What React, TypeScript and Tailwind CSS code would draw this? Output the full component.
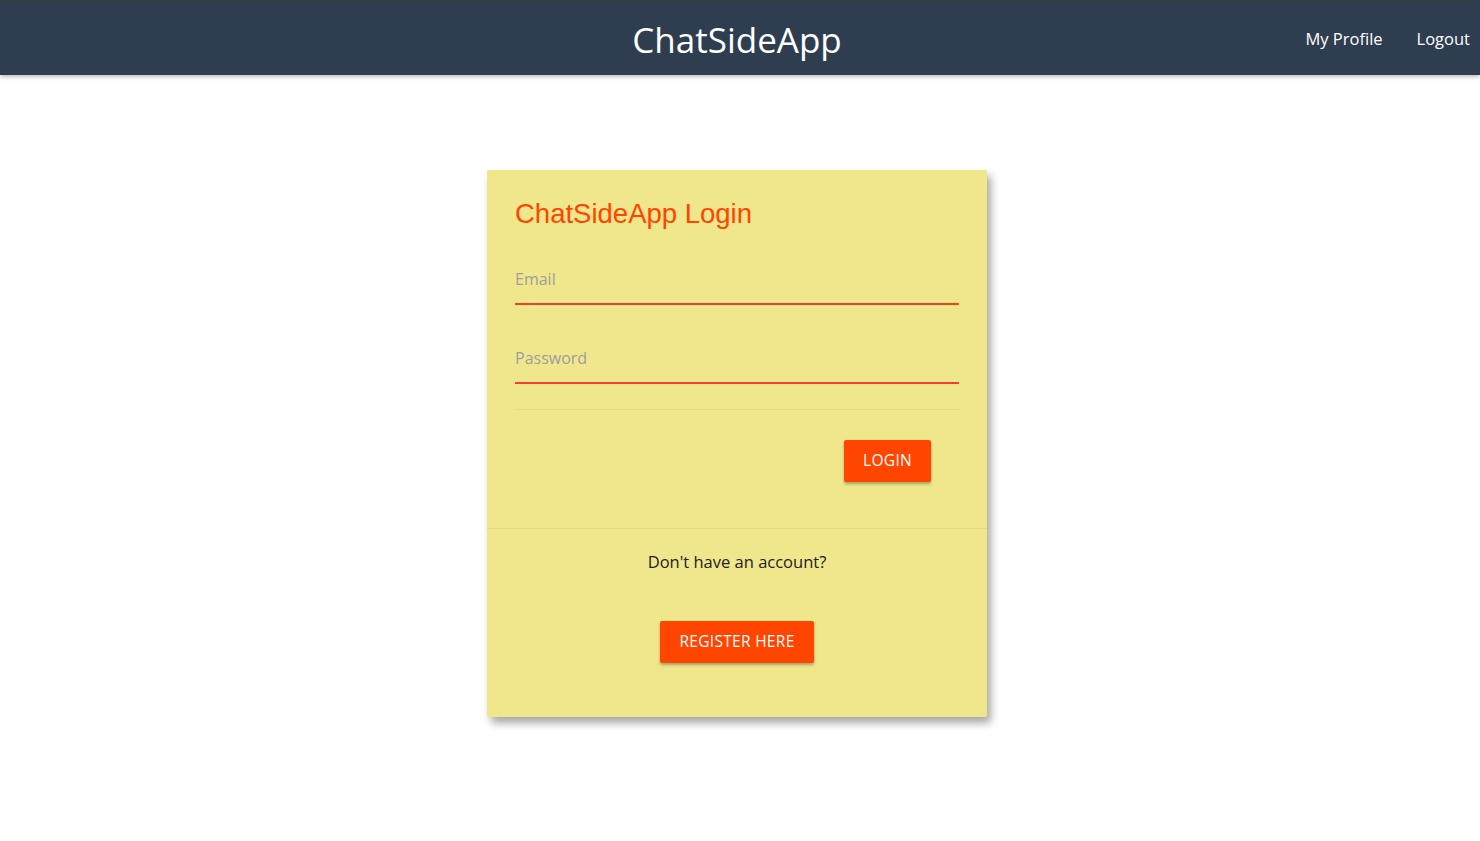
export default function App() {
  return (
    <div className="min-h-screen bg-white font-['Open_Sans',sans-serif]">
      {/* Top nav */}
      <nav className="relative h-[75px] bg-[#2e3e50] border-t border-[#3a3a3a] shadow-[0_2px_4px_rgba(0,0,0,0.25)] flex items-center">
        <div className="absolute inset-y-0 left-0 right-[6px] flex items-center justify-center">
          <span className="text-white text-[35px] leading-none pt-[2px]">ChatSideApp</span>
        </div>
        <ul className="ml-auto flex items-center h-full relative z-10 pt-[3px]">
          <li className="px-[17px] text-white text-[16.5px]">My Profile</li>
          <li className="pl-[17px] pr-[10px] text-white text-[16.5px]">Logout</li>
        </ul>
      </nav>

      {/* Login card */}
      <main className="flex justify-center pt-[95px] pr-[6px]">
        <div className="w-[500px] bg-[#f0e68c] rounded-[2px] shadow-[4px_6px_8px_rgba(0,0,0,0.35)]">
          <div className="px-[28px] pt-[26px] pb-[46px]">
            <h1 className="font-['Liberation_Sans',Arial,sans-serif] text-[27.5px] leading-[36px] text-[#ff4500]">
              ChatSideApp Login
            </h1>
            <div className="mt-[33px]">
              <div className="h-[40px] flex items-end pb-[12px] text-[16px] text-[#9e9e9e] border-b-2 border-[#f4402c]">
                Email
              </div>
            </div>
            <div className="mt-[39px]">
              <div className="h-[40px] flex items-end pb-[12px] text-[16px] text-[#9e9e9e] border-b-2 border-[#f4402c]">
                Password
              </div>
            </div>
            <div className="mt-[25px] border-t border-[#e3da86]" />
            <div className="mt-[30px] flex justify-end pr-[28px]">
              <button className="h-[42px] px-[19px] bg-[#ff4500] text-white text-[15.5px] tracking-[0.3px] rounded-[2px] shadow-[0_2px_3px_rgba(0,0,0,0.3)]">
                LOGIN
              </button>
            </div>
          </div>
          <div className="border-t border-[#e3da86] pt-[20px] pb-[54px] flex flex-col items-center">
            <p className="text-[16.5px] text-[#222] leading-[25px]">Don't have an account?</p>
            <button className="mt-[47px] h-[42px] px-[19px] bg-[#ff4500] text-white text-[15.5px] tracking-[0.3px] rounded-[2px] shadow-[0_2px_3px_rgba(0,0,0,0.3)]">
              REGISTER HERE
            </button>
          </div>
        </div>
      </main>
    </div>
  );
}
